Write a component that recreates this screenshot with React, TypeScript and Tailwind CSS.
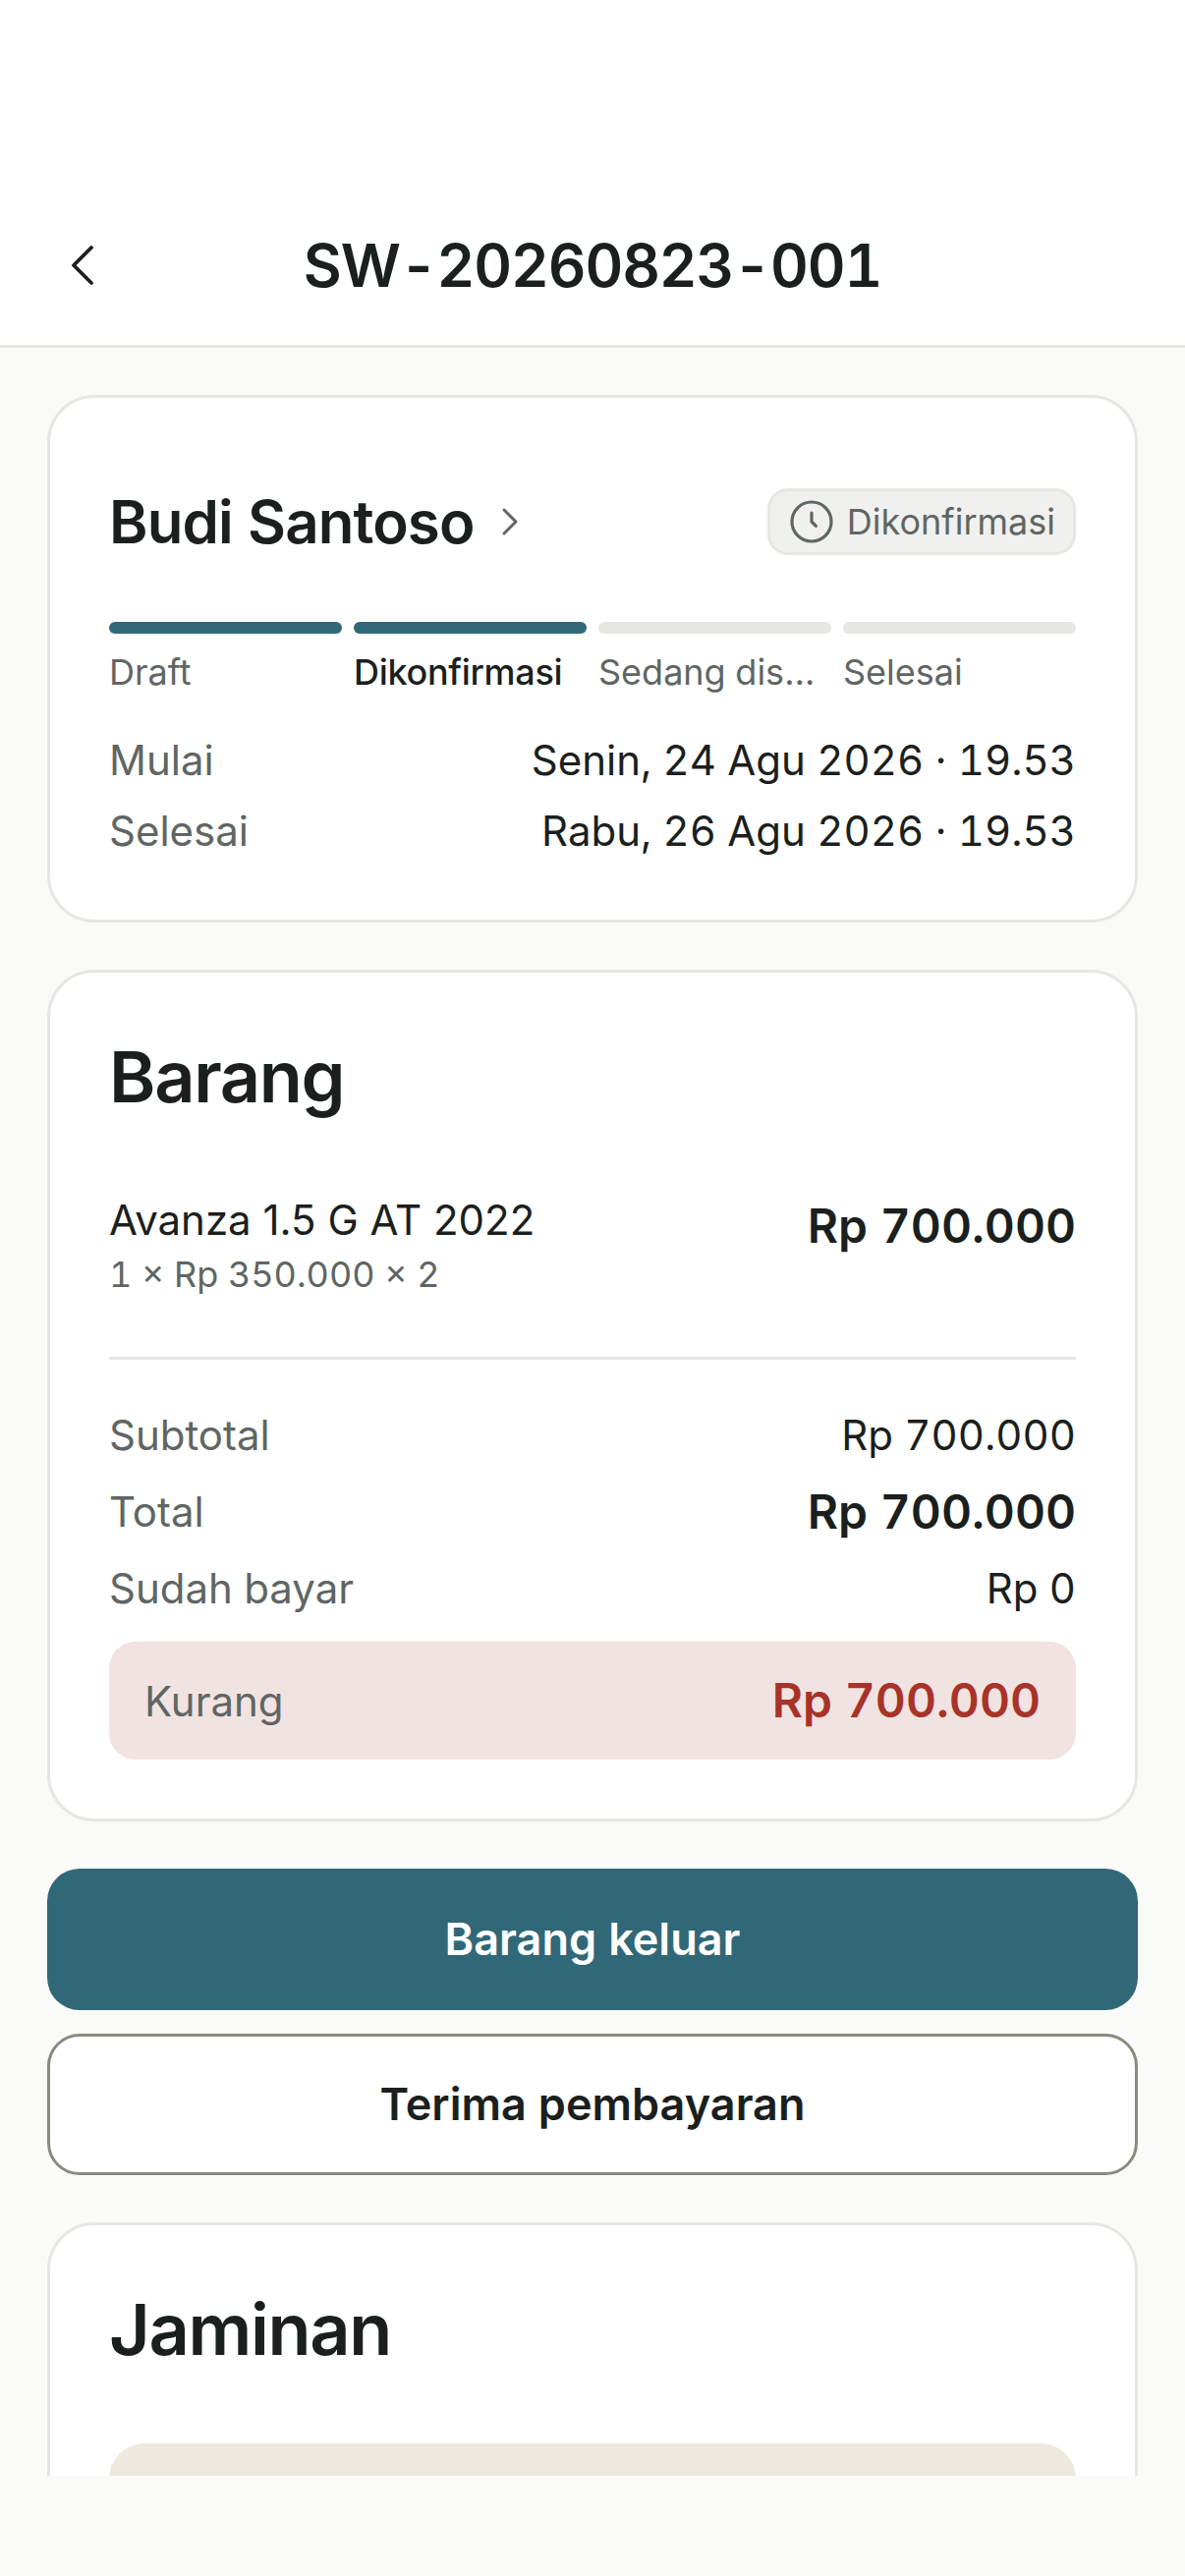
import { ChevronLeft, ChevronRight } from "lucide-react";

const steps = [
  { label: "Draft", done: true, active: false },
  { label: "Dikonfirmasi", done: true, active: true },
  { label: "Sedang disewa", done: false, active: false },
  { label: "Selesai", done: false, active: false },
];

function Card({ children, className = "" }: { children: React.ReactNode; className?: string }) {
  return <section className={`rounded-[48px] border-[3px] border-[#e6e6e3] bg-white p-[60px] ${className}`}>{children}</section>;
}

function Row({ label, children }: { label: string; children: React.ReactNode }) {
  return (
    <div className="flex items-center justify-between text-[42px] leading-[60px]">
      <span className="text-[#5f6664]">{label}</span>
      {children}
    </div>
  );
}

function ClockIcon() {
  return (
    <svg width="48" height="48" viewBox="0 0 24 24" fill="none" stroke="currentColor" strokeWidth="1.6" strokeLinecap="round" strokeLinejoin="round">
      <circle cx="12" cy="12" r="10" />
      <path d="M12 7.5V12l2.2 2.2" />
    </svg>
  );
}

export default function App() {
  return (
    <div className="flex h-[2622px] w-[1206px] flex-col overflow-hidden bg-[#fafaf8] font-['Inter',sans-serif] text-[#1b1f1e] [font-variant-numeric:tabular-nums]">
      <header className="flex h-[354px] shrink-0 items-end border-b-[3px] border-[#e6e6e3] bg-white px-[48px] pb-[45px]">
        <ChevronLeft size={72} strokeWidth={1.25} />
        <h1 className="flex-1 text-center text-[60px] leading-[72px] font-semibold tracking-[-1.1px]">SW-20260823-001</h1>
        <div className="w-[72px]" />
      </header>

      <main className="min-h-0 flex-1 overflow-hidden px-[48px] pt-[48px]">
        <Card>
          <div className="flex h-[132px] items-center justify-between">
            <div className="flex items-center gap-[12px]">
              <span className="text-[60px] leading-[84px] font-semibold tracking-[-0.9px]">Budi Santoso</span>
              <ChevronRight size={48} strokeWidth={1.5} className="text-[#5f6664]" />
            </div>
            <span className="flex h-[68px] items-center gap-[12px] rounded-[21px] border-[3px] border-[#e6e6e3] bg-[#f0f1ef] px-[18px] text-[36px] text-[#5f6664]">
              <ClockIcon />
              Dikonfirmasi
            </span>
          </div>

          <div className="mt-[36px] grid grid-cols-4 gap-[12px]">
            {steps.map((step) => (
              <div key={step.label} className="min-w-0">
                <div className={`h-[12px] rounded-full ${step.done ? "bg-[#316877]" : "bg-[#e6e6e3]"}`} />
                <p className={`mt-[15px] truncate text-[36px] leading-[48px] ${step.active ? "font-medium tracking-[-0.3px] text-[#1b1f1e]" : "text-[#5f6664]"}`}>{step.label}</p>
              </div>
            ))}
          </div>

          <div className="mt-[36px] flex flex-col gap-[12px]">
            <Row label="Mulai">
              <span>Senin, 24 Agu 2026 · 19.53</span>
            </Row>
            <Row label="Selesai">
              <span>Rabu, 26 Agu 2026 · 19.53</span>
            </Row>
          </div>
        </Card>

        <Card className="mt-[48px]">
          <h2 className="text-[72px] leading-[92px] font-semibold tracking-[-1.3px]">Barang</h2>
          <div className="mt-[71px] flex items-start justify-between border-b-[3px] border-[#e6e6e3] pb-[60px]">
            <div>
              <p className="text-[42px] leading-[58px] [font-variant-numeric:normal]">Avanza 1.5 G AT 2022</p>
              <p className="mt-[2px] text-[36px] leading-[48px] text-[#5f6664]">1 × Rp 350.000 × 2</p>
            </div>
            <span className="text-[48px] leading-[70px] font-semibold">Rp 700.000</span>
          </div>

          <div className="mt-[47px] flex flex-col gap-[12px]">
            <Row label="Subtotal">
              <span>Rp 700.000</span>
            </Row>
            <Row label="Total">
              <span className="text-[48px] leading-[72px] font-semibold">Rp 700.000</span>
            </Row>
            <Row label="Sudah bayar">
              <span>Rp 0</span>
            </Row>
          </div>

          <div className="mt-[24px] flex h-[120px] items-center justify-between rounded-[27px] bg-[#f1e3e1] px-[36px] text-[42px] text-[#5f6664]">
            <span>Kurang</span>
            <span className="text-[48px] font-semibold text-[#a8332a]">Rp 700.000</span>
          </div>
        </Card>

        <button className="mt-[48px] block h-[144px] w-full rounded-[33px] bg-[#316877] text-[45px] font-semibold text-white">Barang keluar</button>
        <button className="mt-[24px] block h-[144px] w-full rounded-[33px] border-[3px] border-[#8a8b7f] bg-white text-[45px] font-semibold">Terima pembayaran</button>

        <Card className="mt-[48px]">
          <h2 className="text-[72px] leading-[92px] font-semibold tracking-[-1.3px]">Jaminan</h2>
          <div className="mt-[70px] h-[240px] rounded-[36px] bg-[#ede9de]" />
        </Card>
      </main>

      <div className="h-[102px] shrink-0" />
    </div>
  );
}
